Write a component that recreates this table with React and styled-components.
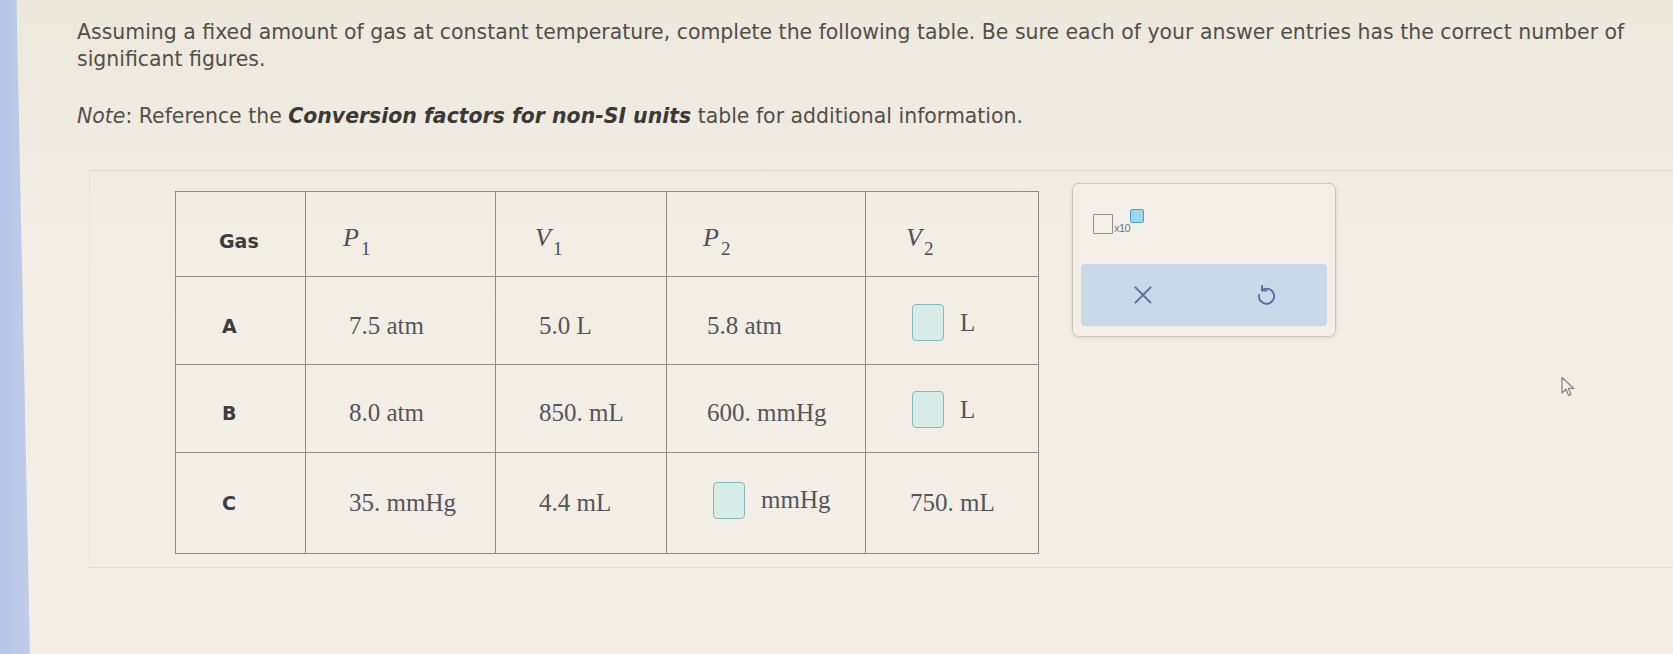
import React from "react";
import styled, { createGlobalStyle } from "styled-components";

const GlobalStyle = createGlobalStyle`
    html, body {
        margin: 0;
        padding: 0;
        background: #f2ede3;
    }
`;

const Page = styled.div`
    position: relative;
    display: flex;
    flex-direction: row;
    width: 1673px;
    height: 654px;
    overflow: hidden;
    background: linear-gradient(180deg, #ede8dc 0%, #f2eee4 35%, #f3efe6 100%);
`;

const SideStrip = styled.div`
    width: 30px;
    flex-shrink: 0;
    background: linear-gradient(90deg, #b6c6e8 0%, #c0cdea 100%);
    clip-path: polygon(0 0, 55% 0, 100% 100%, 0 100%);
`;

const Main = styled.main`
    flex: 1;
    margin-left: -2px;
    padding: 19px 0 0 49px;
    font-family: "DejaVu Sans", Verdana, sans-serif;
    color: #524f4b;
`;

const Prompt = styled.p`
    margin: 0;
    width: 1580px;
    font-size: 20.45px;
    line-height: 27px;
`;

const Note = styled.p`
    margin: 30px 0 0;
    font-size: 20.45px;
    line-height: 27px;
    em {
        font-style: italic;
    }
    b {
        font-style: italic;
        font-weight: bold;
        color: #3a3936;
    }
`;

const QuestionBox = styled.section`
    margin: 40px 0 0 12px;
    height: 396px;
    border-top: 1px solid #e1dbce;
    border-left: 1px solid #ebe5d9;
    border-bottom: 1px solid #e4ded1;
    display: flex;
    flex-direction: row;
    align-items: flex-start;
    padding: 0 0 0 85px;
`;

const Table = styled.table`
    margin-top: 20px;
    border-collapse: collapse;
    border: 1.5px solid #8e8b86;
`;

const Row = styled.tr`
    height: ${(p) => p.height}px;
    td {
        padding-top: ${(p) => p.lift}px;
    }
`;

const Cell = styled.td`
    width: ${(p) => p.width}px;
    box-sizing: border-box;
    padding-left: ${(p) => p.pad || 43}px;
    padding-right: 0;
    padding-bottom: 0;
    border: 1.5px solid #8e8b86;
    vertical-align: middle;
    text-align: left;
    white-space: nowrap;
    font-family: ${(p) => (p.label ? '"DejaVu Sans", Verdana, sans-serif' : '"Liberation Serif", "Times New Roman", serif')};
    font-size: ${(p) => (p.label ? "19px" : "25px")};
    font-weight: ${(p) => (p.label ? "bold" : "normal")};
    color: ${(p) => (p.label ? "#3d3c3f" : "#53545e")};
`;

const MathVar = styled.span`
    font-family: "Liberation Serif", "Times New Roman", serif;
    font-style: italic;
    font-size: 26px;
    color: #4e4f59;
    sub {
        font-style: normal;
        font-size: 19px;
        vertical-align: -9px;
        margin-left: 2px;
    }
`;

const Answer = styled.span`
    display: inline-flex;
    align-items: center;
    gap: 16px;
`;

const AnswerBox = styled.span`
    display: inline-block;
    width: 32px;
    height: 37px;
    box-sizing: border-box;
    border: 1.5px solid #86b8c2;
    border-radius: 4px;
    background: #d8ede8;
`;

const ToolPanel = styled.div`
    margin-left: 33px;
    margin-top: 12px;
    width: 264px;
    height: 154px;
    box-sizing: border-box;
    border: 1.5px solid #cbc8c2;
    border-radius: 7px;
    background: #f4f0e7;
    box-shadow: 0 1px 4px rgba(120, 130, 160, 0.2);
    padding: 0 8px;
    display: flex;
    flex-direction: column;
`;

const ExpRow = styled.div`
    height: 80px;
    display: flex;
    align-items: flex-start;
    padding: 25px 0 0 12px;
    box-sizing: border-box;
`;

const ExpWidget = styled.div`
    display: flex;
    align-items: flex-end;
    height: 25px;
`;

const BaseBox = styled.span`
    width: 18px;
    height: 18px;
    border: 1.5px solid #8f8d95;
    border-radius: 1px;
`;

const Times10 = styled.span`
    font-family: "Liberation Sans", Arial, sans-serif;
    font-size: 11px;
    letter-spacing: -0.5px;
    color: #6f7590;
    margin-left: 1px;
    line-height: 11px;
`;

const ExpBox = styled.span`
    align-self: flex-start;
    width: 12px;
    height: 12px;
    border: 1.5px solid #4c9fc7;
    border-radius: 2px;
    background: #9bd7ea;
`;

const ButtonBar = styled.div`
    height: 62px;
    border-radius: 4px;
    background: #c9d9ea;
    display: grid;
    grid-template-columns: 1fr 1fr;
    align-items: center;
    justify-items: center;
`;

const IconButton = styled.button`
    border: none;
    background: none;
    padding: 0;
    width: 30px;
    height: 30px;
    display: flex;
    align-items: center;
    justify-content: center;
    color: #5a6a9b;
`;

const Pointer = styled.svg`
    position: absolute;
    left: 1560px;
    top: 376px;
`;

const rows = [
    { gas: "A", p1: "7.5 atm", v1: "5.0 L", p2: "5.8 atm", v2: { unit: "L" }, height: 88, lift: 10 },
    { gas: "B", p1: "8.0 atm", v1: "850. mL", p2: "600. mmHg", v2: { unit: "L" }, height: 88, lift: 8 },
    { gas: "C", p1: "35. mmHg", v1: "4.4 mL", p2: { unit: "mmHg" }, v2: "750. mL", height: 101, lift: 0 },
];

const widths = [130, 190, 171, 199, 173];

function renderValue(value) {
    if (typeof value === "string") {
        return value;
    }
    return (
        <Answer>
            <AnswerBox />
            {value.unit}
        </Answer>
    );
}

// answer cells sit a little further in than plain values
function padFor(value, plain) {
    return typeof value === "string" ? plain : 46;
}

function Var({ name, index }) {
    return (
        <MathVar>
            {name}
            <sub>{index}</sub>
        </MathVar>
    );
}

export default function App() {
    return (
        <>
            <GlobalStyle />
            <Page>
                <SideStrip />
                <Main>
                    <Prompt>
                        Assuming a fixed amount of gas at constant temperature, complete the following table. Be sure each of your answer entries has the correct number of significant figures.
                    </Prompt>
                    <Note>
                        <em>Note</em>: Reference the <b>Conversion factors for non-SI units</b> table for additional information.
                    </Note>
                    <QuestionBox>
                        <Table>
                            <tbody>
                                <Row height={85} lift={14}>
                                    <Cell width={widths[0]} label pad={43}>Gas</Cell>
                                    <Cell width={widths[1]} pad={37}><Var name="P" index="1" /></Cell>
                                    <Cell width={widths[2]} pad={39}><Var name="V" index="1" /></Cell>
                                    <Cell width={widths[3]} pad={36}><Var name="P" index="2" /></Cell>
                                    <Cell width={widths[4]} pad={40}><Var name="V" index="2" /></Cell>
                                </Row>
                                {rows.map((row) => (
                                    <Row key={row.gas} height={row.height} lift={row.lift}>
                                        <Cell width={widths[0]} label pad={46}>{row.gas}</Cell>
                                        <Cell width={widths[1]}>{renderValue(row.p1)}</Cell>
                                        <Cell width={widths[2]}>{renderValue(row.v1)}</Cell>
                                        <Cell width={widths[3]} pad={padFor(row.p2, 40)}>{renderValue(row.p2)}</Cell>
                                        <Cell width={widths[4]} pad={padFor(row.v2, 44)}>{renderValue(row.v2)}</Cell>
                                    </Row>
                                ))}
                            </tbody>
                        </Table>
                        <ToolPanel>
                            <ExpRow>
                                <ExpWidget>
                                    <BaseBox />
                                    <Times10>x10</Times10>
                                    <ExpBox />
                                </ExpWidget>
                            </ExpRow>
                            <ButtonBar>
                                <IconButton aria-label="clear">
                                    <svg width="26" height="26" viewBox="0 0 24 24" fill="none" stroke="currentColor" strokeWidth="1.7" strokeLinecap="round">
                                        <path d="M5 5 L19 19 M19 5 L5 19" />
                                    </svg>
                                </IconButton>
                                <IconButton aria-label="undo">
                                    <svg width="26" height="26" viewBox="0 0 24 24" fill="none" stroke="currentColor" strokeWidth="1.7" strokeLinecap="round" strokeLinejoin="round">
                                        <path d="M8.2 7.6 A7 7 0 1 1 5.6 12" />
                                        <path d="M8.4 3.4 L8.2 7.6 L12.4 7.9" />
                                    </svg>
                                </IconButton>
                            </ButtonBar>
                        </ToolPanel>
                    </QuestionBox>
                </Main>
                <Pointer width="16" height="22" viewBox="0 0 16 22">
                    <path d="M2 1.5 L2 17 L6 13.2 L8.6 19.4 L11 18.4 L8.4 12.4 L13.8 12.4 Z" fill="#f4f1ea" stroke="#8a8884" strokeWidth="1.3" strokeLinejoin="round" />
                </Pointer>
            </Page>
        </>
    );
}
